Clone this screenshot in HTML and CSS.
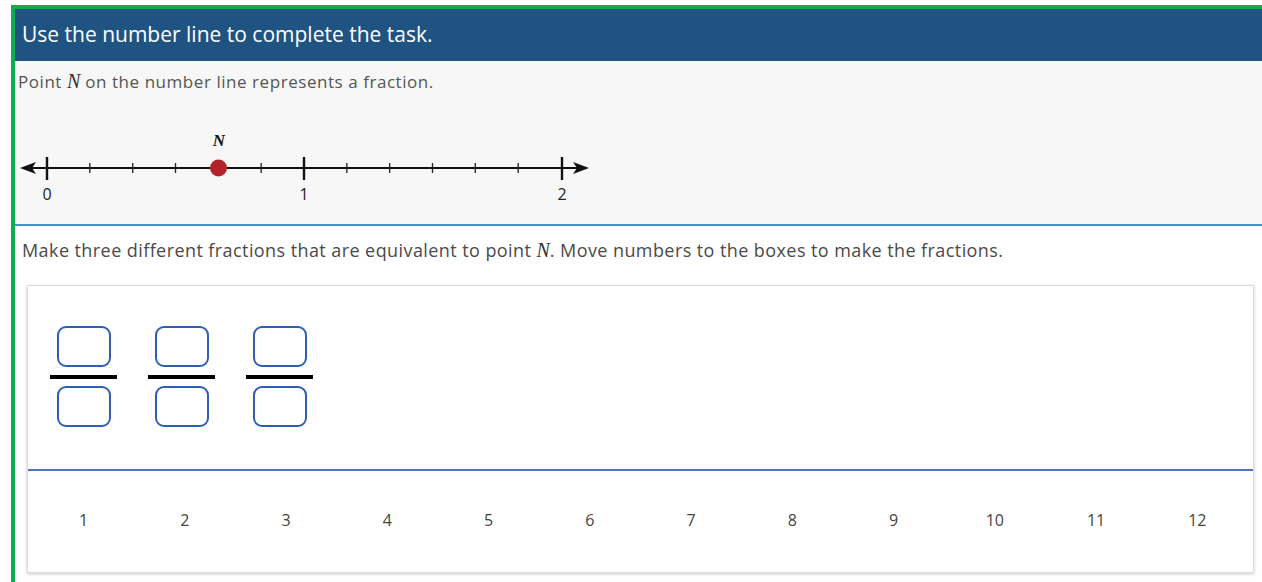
FILE: index.html
```html
<!DOCTYPE html>
<html lang="en">
<head>
<meta charset="utf-8">
<title>Number line task</title>
<link rel="stylesheet" href="styles.css">
</head>
<body>
<div class="frame">
  <div class="title">Use the number line to complete the task.</div>

  <div class="stimulus">
    <p class="prompt">Point <span class="mvar">N</span> on the number line represents a fraction.</p>
    <svg class="numline" width="600" height="131" viewBox="0 0 600 131">
      <!-- axis with arrowheads -->
      <line x1="14" y1="75" x2="565" y2="75" stroke="#111" stroke-width="2"/>
      <path d="M5 75 L21 69 L17 75 L21 81 Z" fill="#111"/>
      <path d="M574 75 L558 69 L562 75 L558 81 Z" fill="#111"/>
      <!-- major ticks -->
      <g stroke="#111" stroke-width="2.4">
        <line x1="32" y1="64" x2="32" y2="87"/>
        <line x1="289" y1="64" x2="289" y2="87"/>
        <line x1="547" y1="64" x2="547" y2="87"/>
      </g>
      <!-- minor ticks (sixths) -->
      <g stroke="#222" stroke-width="1.3">
        <line x1="74.8" y1="70" x2="74.8" y2="80"/>
        <line x1="117.7" y1="70" x2="117.7" y2="80"/>
        <line x1="160.5" y1="70" x2="160.5" y2="80"/>
        <line x1="246.2" y1="70" x2="246.2" y2="80"/>
        <line x1="331.8" y1="70" x2="331.8" y2="80"/>
        <line x1="374.7" y1="70" x2="374.7" y2="80"/>
        <line x1="417.5" y1="70" x2="417.5" y2="80"/>
        <line x1="460.3" y1="70" x2="460.3" y2="80"/>
        <line x1="503.2" y1="70" x2="503.2" y2="80"/>
      </g>
      <g class="nl-label">
        <text x="32" y="107" text-anchor="middle">0</text>
        <text x="289" y="107" text-anchor="middle">1</text>
        <text x="547" y="107" text-anchor="middle">2</text>
      </g>
      <circle cx="203.5" cy="75" r="8.5" fill="#b1222b"/>
      <text class="nl-point" x="204" y="53" text-anchor="middle">N</text>
    </svg>
  </div>

  <div class="task">
    <p class="prompt prompt-task">Make three different fractions that are equivalent to point <span class="mvar">N</span>. Move numbers to the boxes to make the fractions.</p>

    <div class="card">
      <div class="fractions">
        <div class="frac">
          <div class="slot"></div>
          <div class="bar"></div>
          <div class="slot"></div>
        </div>
        <div class="frac">
          <div class="slot"></div>
          <div class="bar"></div>
          <div class="slot"></div>
        </div>
        <div class="frac">
          <div class="slot"></div>
          <div class="bar"></div>
          <div class="slot"></div>
        </div>
      </div>
      <div class="tiles">
        <span class="tile">1</span>
        <span class="tile">2</span>
        <span class="tile">3</span>
        <span class="tile">4</span>
        <span class="tile">5</span>
        <span class="tile">6</span>
        <span class="tile">7</span>
        <span class="tile">8</span>
        <span class="tile">9</span>
        <span class="tile">10</span>
        <span class="tile">11</span>
        <span class="tile">12</span>
      </div>
    </div>
  </div>
</div>
</body>
</html>
```

FILE: styles.css
```css
html, body {
  margin: 0;
  padding: 0;
  background: #ffffff;
}

body {
  font-family: "Open Sans", "Noto Sans", sans-serif;
  overflow: hidden;
}

.frame {
  margin: 5px 0 0 11px;
  border-top: 4px solid #0bb04c;
  border-left: 4px solid #0bb04c;
  min-height: 600px;
}

.title {
  height: 52px;
  line-height: 50px;
  padding-left: 7px;
  background: #1f5482;
  color: #ffffff;
  font-size: 21px;
}

.stimulus {
  background: #f7f7f7;
  border-bottom: 2px solid #4690c3;
}

.prompt {
  margin: 0;
  padding: 10px 0 0 3px;
  height: 22px;
  line-height: 22px;
  font-size: 17px;
  letter-spacing: 0.55px;
  color: #555555;
}

.mvar {
  font-family: "Liberation Serif", "DejaVu Serif", serif;
  font-style: italic;
  font-size: 20px;
  line-height: 10px;
  letter-spacing: 0;
  color: #333;
}

.numline {
  display: block;
}

.nl-label text {
  font-family: "Open Sans", sans-serif;
  font-size: 16px;
  fill: #222;
}

.nl-point {
  font-family: "Liberation Serif", serif;
  font-style: italic;
  font-weight: bold;
  font-size: 17px;
  fill: #111;
}

.prompt-task {
  padding: 13px 0 0 7px;
  font-size: 18px;
  letter-spacing: 0.42px;
  color: #4a4a4a;
}

.card {
  margin: 24px 8px 0 12px;
  background: #ffffff;
  border: 1px solid #dddddd;
  box-shadow: 0 1px 3px rgba(0, 0, 0, 0.22);
}

.fractions {
  display: flex;
  gap: 31px;
  padding: 40px 0 42px 22px;
  border-bottom: 2px solid #4d73bf;
}

.frac {
  width: 67px;
  display: flex;
  flex-direction: column;
  align-items: center;
}

.slot {
  box-sizing: border-box;
  width: 54px;
  height: 41px;
  border: 2px solid #2e5fb5;
  border-radius: 9px;
}

.bar {
  width: 67px;
  height: 4px;
  background: #000;
  margin: 8px 0 7px;
}

.tiles {
  display: flex;
  height: 101px;
  align-items: center;
  padding: 0 5px 4px;
  box-sizing: border-box;
}

.tile {
  flex: 1;
  text-align: center;
  font-size: 16px;
  color: #444444;
}
```
